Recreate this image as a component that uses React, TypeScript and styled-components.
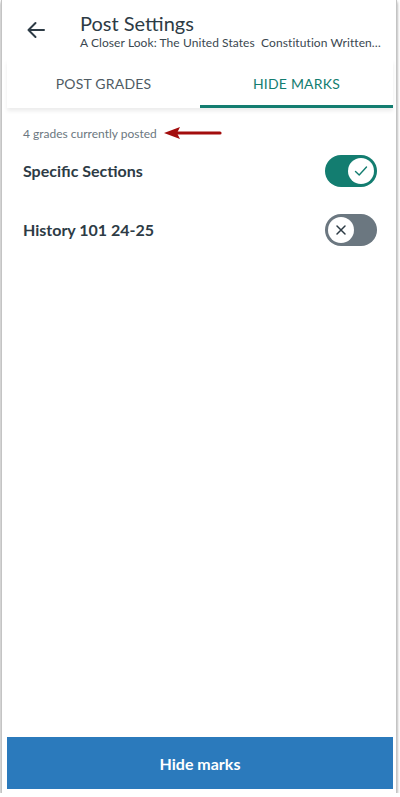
import React from "react";
import styled, { createGlobalStyle } from "styled-components";

const GlobalStyle = createGlobalStyle`
  html, body {
    margin: 0;
    padding: 0;
    background: #ffffff;
  }
  body {
    font-family: Lato, "Open Sans", "Liberation Sans", sans-serif;
    color: #2d3b45;
  }
`;

const Device = styled.div`
  box-sizing: border-box;
  width: 396px;
  height: 793px;
  margin-left: 1px;
  padding: 0 3px 4px 5px;
  border-left: 1px solid #c4c4c4;
  border-right: 1px solid #c4c4c4;
  box-shadow: 0 2px 3px rgba(0, 0, 0, 0.45);
  display: flex;
  flex-direction: column;
  background: #ffffff;
`;

const Header = styled.header`
  display: flex;
  align-items: center;
  height: 60px;
`;

const BackButton = styled.button`
  width: 73px;
  height: 60px;
  border: 0;
  background: none;
  padding: 0 0 0 19px;
  display: flex;
  align-items: center;
  color: #2d3b45;
  cursor: pointer;
`;

const TitleBlock = styled.div`
  display: flex;
  flex-direction: column;
  min-width: 0;
  padding-top: 2px;
`;

const Title = styled.h1`
  margin: 0;
  font-size: 20px;
  font-weight: 400;
  line-height: 24px;
  color: #2d3b45;
`;

const Subtitle = styled.div`
  font-size: 12px;
  font-weight: 400;
  line-height: 16px;
  letter-spacing: 0.08px;
  color: #3a4750;
  white-space: nowrap;
`;

const Tabs = styled.nav`
  display: flex;
  height: 48px;
  box-shadow: 0 3px 4px rgba(0, 0, 0, 0.08);
`;

const Tab = styled.div<{ $active?: boolean }>`
  flex: 1;
  display: flex;
  align-items: center;
  justify-content: center;
  font-size: 14px;
  letter-spacing: 0.2px;
  color: ${(p) => (p.$active ? "#137d70" : "#4f5b63")};
  border-bottom: 3px solid ${(p) => (p.$active ? "#137d70" : "transparent")};
  box-sizing: border-box;
  padding-top: 2px;
`;

const Content = styled.main`
  flex: 1;
  padding: 17px 16px 0 16px;
`;

const Caption = styled.div`
  display: flex;
  align-items: center;
  font-size: 12px;
  color: #6b7780;
  height: 16px;
`;

const Pointer = styled.svg`
  margin-left: 6px;
`;

const Row = styled.div`
  display: flex;
  align-items: center;
  justify-content: space-between;
  height: 59px;
`;

const RowLabel = styled.span`
  font-size: 16px;
  font-weight: 700;
  color: #2d3b45;
`;

const Track = styled.div<{ $on?: boolean }>`
  width: 52px;
  height: 32px;
  border-radius: 16px;
  background: ${(p) => (p.$on ? "#137d70" : "#6b7780")};
  display: flex;
  align-items: center;
  justify-content: ${(p) => (p.$on ? "flex-end" : "flex-start")};
  padding: 0 3px;
  box-sizing: border-box;
`;

const Knob = styled.div`
  width: 26px;
  height: 26px;
  border-radius: 50%;
  background: #ffffff;
  display: flex;
  align-items: center;
  justify-content: center;
`;

const HideButton = styled.button`
  height: 52px;
  border: 0;
  background: #2b7abc;
  color: #ffffff;
  font-family: inherit;
  font-size: 16px;
  font-weight: 700;
  cursor: pointer;
`;

const Toggle: React.FC<{ on?: boolean }> = ({ on }) => (
  <Track $on={on}>
    <Knob>
      {on ? (
        <svg width="14" height="14" viewBox="0 0 14 14">
          <path d="M1.5 7.5 L5.2 11 L12.5 3" fill="none" stroke="#137d70" strokeWidth="1.4" strokeLinecap="round" strokeLinejoin="round" />
        </svg>
      ) : (
        <svg width="12" height="12" viewBox="0 0 12 12">
          <path d="M2 2 L10 10 M10 2 L2 10" fill="none" stroke="#2d3b45" strokeWidth="1.5" strokeLinecap="round" />
        </svg>
      )}
    </Knob>
  </Track>
);

export default function App() {
  return (
    <>
      <GlobalStyle />
      <Device>
        <Header>
          <BackButton aria-label="Back">
            <svg width="20" height="20" viewBox="0 0 20 20">
              <path d="M18 10 H2.5 M9.5 3 L2.5 10 L9.5 17" fill="none" stroke="#2d3b45" strokeWidth="2" strokeLinecap="round" strokeLinejoin="round" />
            </svg>
          </BackButton>
          <TitleBlock>
            <Title>Post Settings</Title>
            <Subtitle>A Closer Look: The United States&nbsp; Constitution Written…</Subtitle>
          </TitleBlock>
        </Header>
        <Tabs>
          <Tab>POST GRADES</Tab>
          <Tab $active>HIDE MARKS</Tab>
        </Tabs>
        <Content>
          <Caption>
            4 grades currently posted
            <Pointer width="60" height="14" viewBox="0 0 60 14">
              <path d="M14 7 H57" stroke="#a30d0d" strokeWidth="3.2" strokeLinecap="round" />
              <path d="M1 7 L17 1 L14 7 L17 13 Z" fill="#a30d0d" />
            </Pointer>
          </Caption>
          <Row>
            <RowLabel>Specific Sections</RowLabel>
            <Toggle on />
          </Row>
          <Row>
            <RowLabel>History 101 24-25</RowLabel>
            <Toggle />
          </Row>
        </Content>
        <HideButton>Hide marks</HideButton>
      </Device>
    </>
  );
}
